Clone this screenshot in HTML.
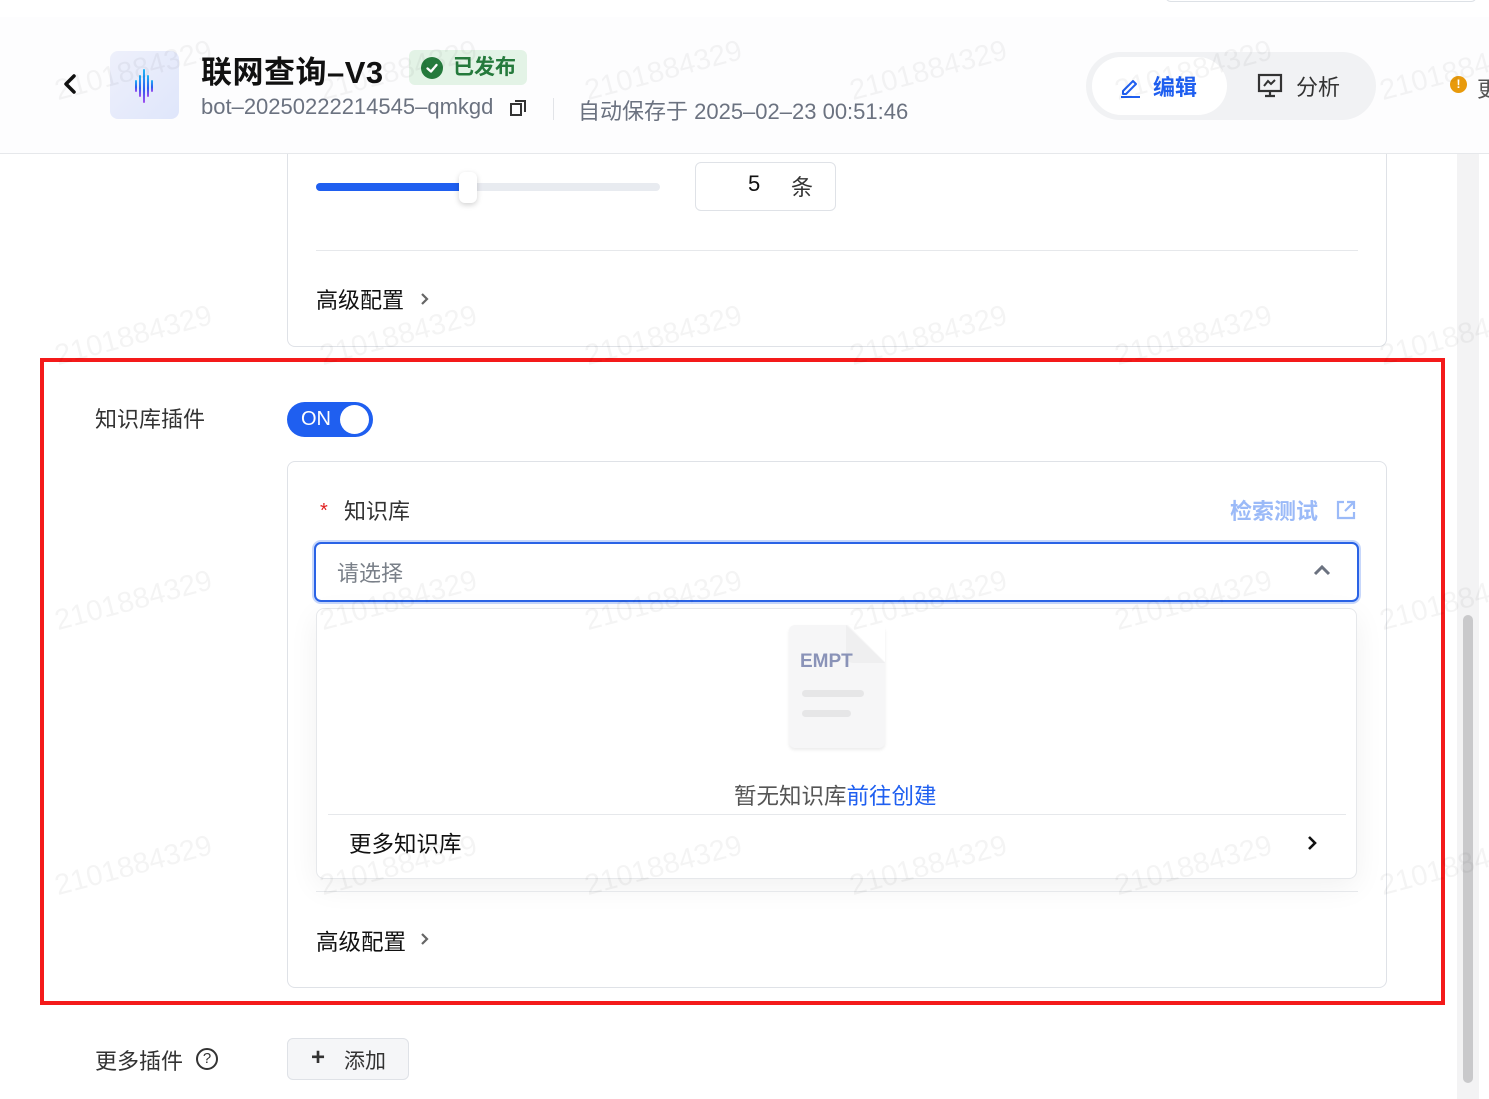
<!DOCTYPE html>
<html><head><meta charset="utf-8">
<style>
*{box-sizing:border-box;margin:0;padding:0}
body{width:1489px;height:1099px;overflow:hidden;background:#fff;font-family:"Liberation Sans","Noto Sans CJK SC",sans-serif;position:relative;color:#1f2329}
.abs{position:absolute}
.wm{position:absolute;font-size:29px;color:rgba(0,0,0,0.045);transform:rotate(-15deg);transform-origin:left bottom;white-space:nowrap;pointer-events:none;z-index:50}
</style></head><body>
<div class="abs" style="left:0;top:0;width:1489px;height:17px;background:#fff;box-shadow:0 2px 6px rgba(0,0,0,0.06)"></div>
<div class="abs" style="left:1165px;top:-10px;width:312px;height:12px;border:1px solid #dde1e6;border-radius:6px"></div>
<div class="abs" style="left:0;top:17px;width:1489px;height:137px;background:#fdfdfe;border-bottom:1px solid #e6e8eb"></div>
<svg class="abs" style="left:60px;top:72px" width="20" height="24" viewBox="0 0 20 24"><path d="M14 4 L6 12 L14 20" stroke="#111" stroke-width="3.5" fill="none" stroke-linecap="round" stroke-linejoin="round"/></svg>
<div class="abs" style="left:110px;top:51px;width:69px;height:68px;border-radius:8px;background:linear-gradient(135deg,#eef0fb,#dfe6fb)"></div>
<svg class="abs" style="left:133px;top:66px" width="24" height="38" viewBox="0 0 24 38">
<defs><linearGradient id="g" x1="0" y1="0" x2="0" y2="1"><stop offset="0" stop-color="#1fb6f5"/><stop offset=".6" stop-color="#2b5cf0"/><stop offset="1" stop-color="#a34df0"/></linearGradient></defs>
<rect x="2" y="14" width="2" height="12" rx="1" fill="url(#g)"/><rect x="6" y="9" width="2" height="22" rx="1" fill="url(#g)"/><rect x="10" y="3" width="2" height="34" rx="1" fill="url(#g)"/><rect x="14" y="9" width="2" height="22" rx="1" fill="url(#g)"/><rect x="18" y="14" width="2" height="12" rx="1" fill="url(#g)"/></svg>
<div class="abs" style="left:201px;top:47px;font-size:31px;font-weight:bold;color:#111;letter-spacing:0.5px">联网查询–V3</div>
<div class="abs" style="left:409px;top:50px;width:118px;height:35px;border-radius:6px;background:#e3f3e6;color:#257a3c;font-size:21px;font-weight:bold;line-height:35px;padding-left:44px">已发布</div>
<div class="abs" style="left:421px;top:57px;width:22px;height:22px;border-radius:50%;background:#257a3c"></div>
<svg class="abs" style="left:421px;top:57px" width="22" height="22"><path d="M6.5 11.5 L10 14.5 L15.5 8" stroke="#fff" stroke-width="2.4" fill="none" stroke-linecap="round" stroke-linejoin="round"/></svg>
<div class="abs" style="left:201px;top:94px;font-size:22px;color:#6b7280">bot–20250222214545–qmkgd</div>
<svg class="abs" style="left:509px;top:99px" width="18" height="18" viewBox="0 0 18 18"><rect x="2" y="5" width="10" height="11" fill="none" stroke="#333" stroke-width="2"/><path d="M6 2 H16 V13" fill="none" stroke="#333" stroke-width="2"/></svg>
<div class="abs" style="left:553px;top:98px;width:1px;height:22px;background:#e2e4e8"></div>
<div class="abs" style="left:578px;top:94px;font-size:22px;color:#6b7280">自动保存于 2025–02–23 00:51:46</div>
<div class="abs" style="left:1086px;top:52px;width:290px;height:68px;border-radius:34px;background:#f1f2f4"></div>
<div class="abs" style="left:1092px;top:57px;width:135px;height:58px;border-radius:29px;background:#fff"></div>
<svg class="abs" style="left:1119px;top:75px" width="24" height="24" viewBox="0 0 24 24"><path d="M4 16 L14 6 L17 9 L7 19 H4 Z" fill="none" stroke="#1f5ff0" stroke-width="2" stroke-linejoin="round"/><path d="M2 22 H21" stroke="#1f5ff0" stroke-width="2"/></svg>
<div class="abs" style="left:1153px;top:70px;font-size:22px;font-weight:bold;color:#1f5ff0">编辑</div>
<svg class="abs" style="left:1257px;top:73px" width="26" height="26" viewBox="0 0 26 26"><rect x="2" y="2" width="22" height="16" fill="none" stroke="#333" stroke-width="2.2"/><path d="M7 13 L11 8 L14 11 L18 7" fill="none" stroke="#333" stroke-width="2"/><path d="M13 18 V23 M8 23 H18" stroke="#333" stroke-width="2.2"/></svg>
<div class="abs" style="left:1296px;top:70px;font-size:22px;color:#333">分析</div>
<div class="abs" style="left:1450px;top:76px;width:17px;height:17px;border-radius:50%;background:#e89a0c;color:#fff;font-size:12px;font-weight:bold;text-align:center;line-height:17px">!</div>
<div class="abs" style="left:1477px;top:72px;font-size:22px;color:#555">更</div>
<div class="abs" style="left:1457px;top:154px;width:22px;height:945px;background:#f3f3f4"></div>
<div class="abs" style="left:1463px;top:615px;width:10px;height:468px;border-radius:5px;background:#c9c9cb"></div>
<div class="abs" style="left:287px;top:154px;width:1100px;height:193px;border:1px solid #dfe2e7;border-top:none;border-radius:0 0 8px 8px;background:#fff"></div>
<div class="abs" style="left:316px;top:183px;width:344px;height:8px;border-radius:4px;background:#e8ebf0"></div>
<div class="abs" style="left:316px;top:183px;width:152px;height:8px;border-radius:4px;background:#1f5ff0"></div>
<div class="abs" style="left:459px;top:172px;width:18px;height:31px;border-radius:6px;background:#fff;box-shadow:0 2px 6px rgba(0,0,0,0.18)"></div>
<div class="abs" style="left:695px;top:162px;width:141px;height:49px;border:1px solid #dfe2e7;border-radius:6px"></div>
<div class="abs" style="left:748px;top:171px;font-size:22px;color:#111">5</div>
<div class="abs" style="left:791px;top:170px;font-size:22px;color:#333">条</div>
<div class="abs" style="left:316px;top:250px;width:1042px;height:1px;background:#e6e8eb"></div>
<div class="abs" style="left:316px;top:283px;font-size:22px;color:#111">高级配置</div>
<svg class="abs" style="left:419px;top:291px" width="12" height="16"><path d="M3 3 L8 8 L3 13" stroke="#666" stroke-width="2.2" fill="none"/></svg>
<div class="abs" style="left:40px;top:358px;width:1405px;height:647px;border:4px solid #f41a1a;z-index:40"></div>
<div class="abs" style="left:95px;top:402px;font-size:22px;color:#333">知识库插件</div>
<div class="abs" style="left:287px;top:402px;width:86px;height:35px;border-radius:18px;background:#1f5ff0"></div>
<div class="abs" style="left:301px;top:408px;font-size:20px;color:#fff">ON</div>
<div class="abs" style="left:340px;top:405px;width:29px;height:29px;border-radius:50%;background:#fff"></div>
<div class="abs" style="left:287px;top:461px;width:1100px;height:527px;border:1px solid #dfe2e7;border-radius:8px;background:#fff"></div>
<div class="abs" style="left:320px;top:500px;font-size:20px;color:#e02020">*</div>
<div class="abs" style="left:344px;top:494px;font-size:22px;color:#333">知识库</div>
<div class="abs" style="left:1230px;top:494px;font-size:22px;font-weight:bold;color:#9bbaf8">检索测试</div>
<svg class="abs" style="left:1335px;top:499px" width="22" height="22" viewBox="0 0 22 22"><path d="M9 3 H3 V19 H19 V13" fill="none" stroke="#9bbaf8" stroke-width="2.2"/><path d="M12 3 H19 V10 M19 3 L10 12" fill="none" stroke="#9bbaf8" stroke-width="2.2"/></svg>
<div class="abs" style="left:314px;top:542px;width:1045px;height:60px;border-radius:7px;border:2px solid #2a63e6;box-shadow:0 0 0 2px #c7d7fb;background:#fff"></div>
<div class="abs" style="left:337px;top:556px;font-size:22px;color:#7a8089">请选择</div>
<svg class="abs" style="left:1312px;top:562px" width="20" height="16"><path d="M3 12 L10 5 L17 12" stroke="#6b7280" stroke-width="3" fill="none"/></svg>
<div class="abs" style="left:316px;top:608px;width:1041px;height:271px;border:1px solid #e6e8eb;border-radius:8px;background:#fff;box-shadow:0 8px 30px rgba(0,0,0,0.06)"></div>
<div class="abs" style="left:789px;top:625px;width:96px;height:123px;border-radius:6px;background:#f6f6f7;box-shadow:0 2px 3px rgba(0,0,0,0.08)"></div>
<svg class="abs" style="left:846px;top:625px" width="40" height="40"><path d="M0 0 L0 30 Q0 38 8 38 L39 38 Z" fill="#efeff0"/><path d="M2 0 L39 37 L39 0 Z" fill="#fff"/></svg>
<div class="abs" style="left:800px;top:651px;font-size:19px;font-weight:bold;color:#8a93b8">EMPT</div>
<div class="abs" style="left:802px;top:690px;width:62px;height:7px;border-radius:4px;background:#e6e6e7"></div>
<div class="abs" style="left:802px;top:710px;width:49px;height:7px;border-radius:4px;background:#e6e6e7"></div>
<div class="abs" style="left:734px;top:779px;font-size:22.5px;color:#555">暂无知识库<span style="color:#1f5ff0">前往创建</span></div>
<div class="abs" style="left:328px;top:814px;width:1018px;height:1px;background:#e6e8eb"></div>
<div class="abs" style="left:349px;top:827px;font-size:22.5px;color:#111">更多知识库</div>
<svg class="abs" style="left:1306px;top:834px" width="14" height="18"><path d="M3 3 L9 9 L3 15" stroke="#111" stroke-width="2.6" fill="none"/></svg>
<div class="abs" style="left:316px;top:891px;width:1042px;height:1px;background:#e6e8eb"></div>
<div class="abs" style="left:316px;top:925px;font-size:22.5px;color:#111">高级配置</div>
<svg class="abs" style="left:419px;top:931px" width="12" height="16"><path d="M3 3 L8 8 L3 13" stroke="#666" stroke-width="2.2" fill="none"/></svg>
<div class="abs" style="left:95px;top:1044px;font-size:22px;color:#333">更多插件</div>
<div class="abs" style="left:196px;top:1048px;width:22px;height:22px;border-radius:50%;border:2px solid #333;font-size:15px;text-align:center;line-height:18px;color:#333">?</div>
<div class="abs" style="left:287px;top:1038px;width:122px;height:42px;border-radius:6px;border:1px solid #dfe2e7;background:#f5f6f8"></div>
<div class="abs" style="left:311px;top:1044px;font-size:24px;font-weight:bold;color:#333">+</div>
<div class="abs" style="left:344px;top:1045px;font-size:21px;color:#333">添加</div>
<div class="wm" style="left:60px;top:75px">2101884329</div>
<div class="wm" style="left:325px;top:75px">2101884329</div>
<div class="wm" style="left:590px;top:75px">2101884329</div>
<div class="wm" style="left:855px;top:75px">2101884329</div>
<div class="wm" style="left:1120px;top:75px">2101884329</div>
<div class="wm" style="left:1385px;top:75px">2101884329</div>
<div class="wm" style="left:60px;top:340px">2101884329</div>
<div class="wm" style="left:325px;top:340px">2101884329</div>
<div class="wm" style="left:590px;top:340px">2101884329</div>
<div class="wm" style="left:855px;top:340px">2101884329</div>
<div class="wm" style="left:1120px;top:340px">2101884329</div>
<div class="wm" style="left:1385px;top:340px">2101884329</div>
<div class="wm" style="left:60px;top:605px">2101884329</div>
<div class="wm" style="left:325px;top:605px">2101884329</div>
<div class="wm" style="left:590px;top:605px">2101884329</div>
<div class="wm" style="left:855px;top:605px">2101884329</div>
<div class="wm" style="left:1120px;top:605px">2101884329</div>
<div class="wm" style="left:1385px;top:605px">2101884329</div>
<div class="wm" style="left:60px;top:870px">2101884329</div>
<div class="wm" style="left:325px;top:870px">2101884329</div>
<div class="wm" style="left:590px;top:870px">2101884329</div>
<div class="wm" style="left:855px;top:870px">2101884329</div>
<div class="wm" style="left:1120px;top:870px">2101884329</div>
<div class="wm" style="left:1385px;top:870px">2101884329</div>
</body></html>
